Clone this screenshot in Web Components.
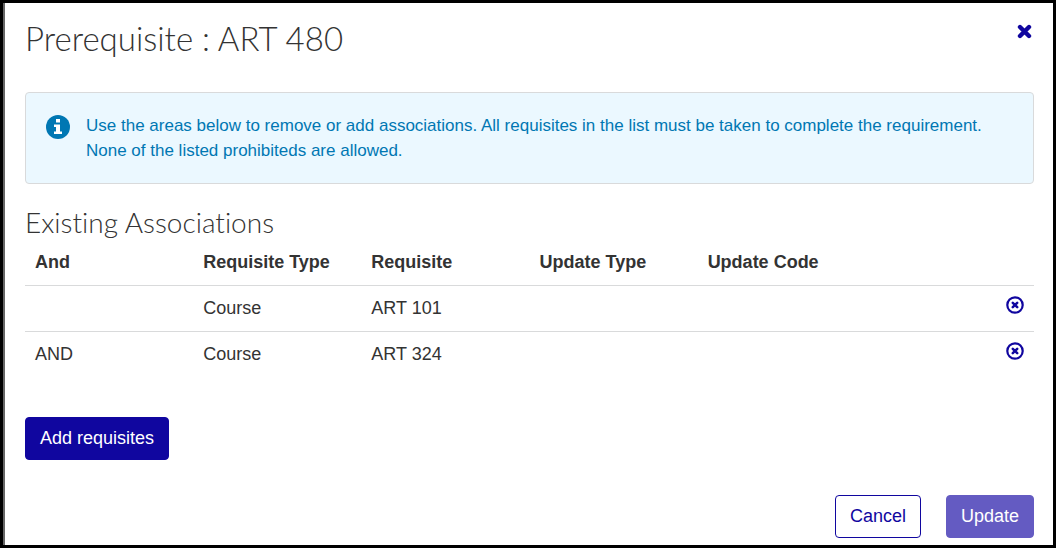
<!DOCTYPE html>
<html lang="en">
<head>
  <meta charset="utf-8">
  <meta name="viewport" content="width=device-width, initial-scale=1">
  <title>Prerequisite : ART 480</title>
  <style>
    * {
      box-sizing: border-box;
    }
    body {
      margin: 0;
      background: #fff;
      color: #333;
      font: 18px/25px "Liberation Sans", Arial, sans-serif;
      --brand: #10069f;
      --line: #d9dadb;
      --info: #0077b3;
    }
  </style>
</head>
<body>
  <modal-dialog heading="Prerequisite : ART 480">
    <info-alert>Use the areas below to remove or add associations. All requisites in the list must be taken to complete the requirement. None of the listed prohibiteds are allowed.</info-alert>
    <association-table heading="Existing Associations"></association-table>
    <action-button>Add requisites</action-button>
    <action-button slot="footer" variant="outline">Cancel</action-button>
    <action-button slot="footer" variant="muted">Update</action-button>
  </modal-dialog>

  <script>
    class ModalDialog extends HTMLElement {
      constructor() {
        super();
        this.attachShadow({ mode: 'open' });
      }
      connectedCallback() {
        this.shadowRoot.innerHTML = `
          <section role="dialog" aria-labelledby="title">
            <header>
              <h1 id="title">${this.getAttribute('heading')}</h1>
              <button type="button" aria-label="Close">
                <svg width="15" height="15" viewBox="0 0 15 15" aria-hidden="true">
                  <path d="M3 3l9 9M12 3l-9 9" stroke="currentColor" stroke-width="4.4" stroke-linecap="round"/>
                </svg>
              </button>
            </header>
            <main><slot></slot></main>
            <footer><slot name="footer"></slot></footer>
          </section>
          ${this.getStyle()}
        `;
      }
      getStyle() {
        return `<style>
          :host {
            display: block;
            border: 3px solid #000;
          }
          section {
            box-sizing: border-box;
            display: flex;
            flex-direction: column;
            min-height: calc(100vh - 6px);
            padding: 15px 19px 7px 20px;
            border-left: 2px solid #666;
          }
          header {
            display: flex;
            align-items: flex-start;
            justify-content: space-between;
            margin-bottom: 34px;
          }
          h1 {
            margin: 0;
            font: 300 33px/40px Lato, sans-serif;
          }
          button {
            display: flex;
            padding: 6px 2px;
            border: 0;
            background: none;
            color: var(--brand);
            cursor: pointer;
          }
          footer {
            display: flex;
            justify-content: flex-end;
            gap: 25px;
            margin-top: auto;
            padding-top: 20px;
          }
        </style>`;
      }
    }
    customElements.define('modal-dialog', ModalDialog);

    class InfoAlert extends HTMLElement {
      constructor() {
        super();
        this.attachShadow({ mode: 'open' });
      }
      connectedCallback() {
        this.shadowRoot.innerHTML = `
          <svg width="24" height="24" viewBox="0 0 24 24" aria-hidden="true">
            <circle cx="12" cy="12" r="12" fill="currentColor"/>
            <path d="M10 4h4v3.500h-4zM8 9.500h6v7h2V19H8v-2.500h2V12H8z" fill="#fff"/>
          </svg>
          <p><slot></slot></p>
          ${this.getStyle()}
        `;
      }
      getStyle() {
        return `<style>
          :host {
            display: flex;
            gap: 16px;
            padding: 20px;
            border: 1px solid var(--line);
            border-radius: 4px;
            background: #ebf8ff;
            color: var(--info);
            font-size: 17px;
          }
          svg {
            flex: none;
            margin-top: 2px;
          }
          p {
            margin: 0;
          }
        </style>`;
      }
    }
    customElements.define('info-alert', InfoAlert);

    class AssociationTable extends HTMLElement {
      constructor() {
        super();
        this.attachShadow({ mode: 'open' });
        this.columns = ['And', 'Requisite Type', 'Requisite', 'Update Type', 'Update Code'];
        this.rows = [
          ['', 'Course', 'ART 101', '', ''],
          ['AND', 'Course', 'ART 324', '', '']
        ];
      }
      getRows() {
        let rowsHTML = '';
        this.rows.forEach(row => {
          rowsHTML += `
            <tr>
              ${row.map(cell => `<td>${cell}</td>`).join('')}
              <td class="remove">
                <button type="button" aria-label="Remove ${row[2]}">
                  <svg width="18" height="18" viewBox="0 0 18 18" aria-hidden="true" fill="none" stroke="currentColor">
                    <circle cx="9" cy="9" r="7.700" stroke-width="2.200"/>
                    <path d="M6.800 6.800l4.400 4.400M11.200 6.800l-4.400 4.400" stroke-width="2.500" stroke-linecap="round"/>
                  </svg>
                </button>
              </td>
            </tr>
          `;
        });
        return rowsHTML;
      }
      connectedCallback() {
        this.shadowRoot.innerHTML = `
          <h2 id="heading">${this.getAttribute('heading')}</h2>
          <table aria-labelledby="heading">
            <thead>
              <tr>${this.columns.map(name => `<th scope="col">${name}</th>`).join('')}<td></td></tr>
            </thead>
            <tbody>${this.getRows()}</tbody>
          </table>
          ${this.getStyle()}
        `;
      }
      getStyle() {
        return `<style>
          :host {
            display: block;
            margin: 20px 0 40px;
          }
          h2 {
            margin: 0;
            font: 300 28px/36px Lato, sans-serif;
            font-variant-ligatures: none;
          }
          table {
            width: 100%;
            table-layout: fixed;
            border-spacing: 0;
          }
          th, td {
            height: 25px;
            padding: 10px;
            text-align: left;
          }
          tbody td {
            border-top: 1px solid var(--line);
          }
          .remove {
            vertical-align: top;
          }
          button {
            display: block;
            margin-left: auto;
            padding: 0;
            border: 0;
            background: none;
            color: var(--brand);
            cursor: pointer;
          }
          svg {
            display: block;
          }
        </style>`;
      }
    }
    customElements.define('association-table', AssociationTable);

    class ActionButton extends HTMLElement {
      constructor() {
        super();
        this.attachShadow({ mode: 'open' });
      }
      connectedCallback() {
        this.shadowRoot.innerHTML = `
          <button type="button"><slot></slot></button>
          ${this.getStyle()}
        `;
      }
      getStyle() {
        return `<style>
          :host {
            display: inline-flex;
          }
          button {
            padding: 8px 14px;
            border: 1px solid var(--brand);
            border-radius: 4px;
            background: var(--brand);
            color: #fff;
            font: inherit;
            cursor: pointer;
          }
          :host([variant="outline"]) button {
            background: #fff;
            color: var(--brand);
          }
          :host([variant="muted"]) button {
            border-color: #645bc2;
            background: #645bc2;
          }
        </style>`;
      }
    }
    customElements.define('action-button', ActionButton);
  </script>
</body>
</html>
